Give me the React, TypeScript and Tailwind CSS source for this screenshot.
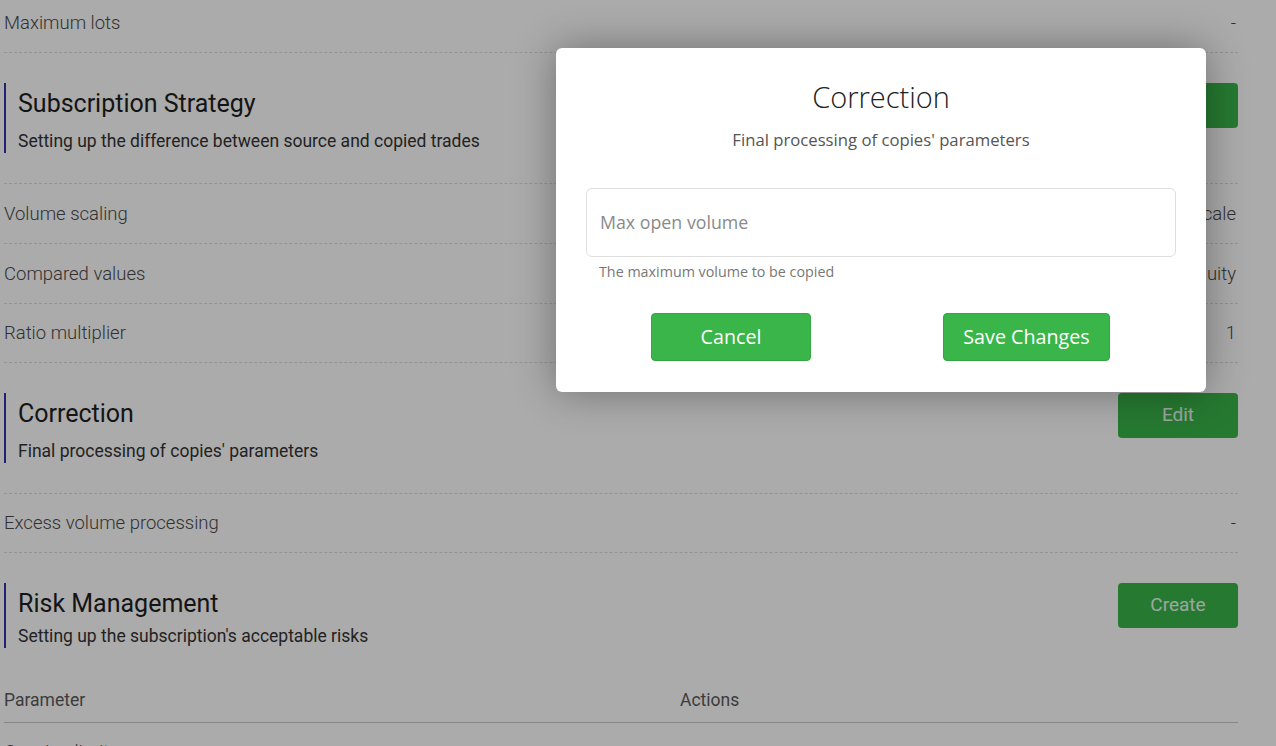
import React from "react";

const roboto = { fontFamily: "Roboto, 'Liberation Sans', sans-serif" };
const modalFont = { fontFamily: "'Open Sans', Lato, sans-serif" };

function Row({ label, value, h = "h-[60px]" }: { label: string; value: string; h?: string }) {
  return (
    <div className={`flex ${h} pt-[2px] items-center justify-between border-b border-dashed border-[#dcdcdc]`}>
      <span className="text-[18.5px] font-light text-[#4a4a4a]">{label}</span>
      <span className="text-[18.5px] font-light text-[#4a4a4a] pr-[2px]">{value}</span>
    </div>
  );
}

function Section({
  title,
  subtitle,
  button,
}: {
  title: string;
  subtitle: string;
  button: string;
}) {
  return (
    <div className="flex items-start justify-between py-[30px] border-b border-dashed border-[#dcdcdc]">
      <div className="border-l-2 border-[#3434ad] pl-[12px]">
        <div className="h-[42px] flex items-center text-[25px] text-[#1e1e1e]">{title}</div>
        <div className="mt-[4px] h-[24px] flex items-center text-[17.5px] text-[#333]">{subtitle}</div>
      </div>
      <button className="w-[120px] h-[45px] rounded-[4px] bg-[#39b54a] text-white/90 text-[19px]">
        {button}
      </button>
    </div>
  );
}

export default function App() {
  return (
    <div className="relative w-[1276px] h-[746px] overflow-hidden bg-white" style={roboto}>
      <div className="pl-[4px] w-[1238px] -mt-[7px]">
        <Row label="Maximum lots" value="-" />
        <Section
          title="Subscription Strategy"
          subtitle="Setting up the difference between source and copied trades"
          button="Edit"
        />
        <Row label="Volume scaling" value="Scale" />
        <Row label="Compared values" value="Equity" />
        <Row label="Ratio multiplier" value="1" h="h-[59px]" />
        <Section title="Correction" subtitle="Final processing of copies' parameters" button="Edit" />
        <Row label="Excess volume processing" value="-" h="h-[59px]" />
        <div className="flex items-start justify-between pt-[30px] pb-[30px]">
          <div className="border-l-2 border-[#3434ad] pl-[12px]">
            <div className="h-[42px] flex items-center text-[25px] text-[#1e1e1e]">Risk Management</div>
            <div className="-mt-[1px] h-[24px] flex items-center text-[17.5px] text-[#333]">
              Setting up the subscription's acceptable risks
            </div>
          </div>
          <button className="w-[120px] h-[45px] rounded-[4px] bg-[#39b54a] text-white/90 text-[19px]">
            Create
          </button>
        </div>
        <div className="flex h-[45px] items-center border-b border-[#c8c8c8] text-[17.5px] text-[#5a5a5a]">
          <span className="w-[676px]">Parameter</span>
          <span>Actions</span>
        </div>
        <div className="flex h-[60px] items-center text-[18.5px] font-light text-[#4a4a4a]">Copying limits</div>
      </div>

      <div className="absolute inset-0 bg-black/[0.33]" />

      <div
        className="absolute left-[556px] top-[48px] w-[650px] h-[344px] rounded-[6px] bg-white shadow-[0_0_40px_rgba(0,0,0,0.35)] flex flex-col items-center"
        style={modalFont}
      >
        <div className="mt-[30px] h-[38px] flex items-center text-[29px] font-light text-[#222]">Correction</div>
        <div className="mt-[13px] h-[22px] flex items-center text-[16.7px] text-[#555]">
          Final processing of copies' parameters
        </div>
        <div className="mt-[37px] w-[590px]">
          <div className="h-[69px] rounded-[6px] border border-[#dedede] flex items-center px-[13px] text-[17.8px] text-[#8a8a8a]">
            Max open volume
          </div>
          <div className="mt-[6px] h-[18px] flex items-center pl-[13px] text-[14.3px] text-[#777]">
            The maximum volume to be copied
          </div>
        </div>
        <div className="mt-[32px] w-[590px] flex">
          <button className="ml-[65px] w-[160px] h-[48px] rounded-[4px] bg-[#39b54a] border border-[#33a543] text-white text-[19.7px]">
            Cancel
          </button>
          <button className="ml-[132px] w-[167px] h-[48px] rounded-[4px] bg-[#39b54a] border border-[#33a543] text-white text-[19.7px]">
            Save Changes
          </button>
        </div>
      </div>
    </div>
  );
}
